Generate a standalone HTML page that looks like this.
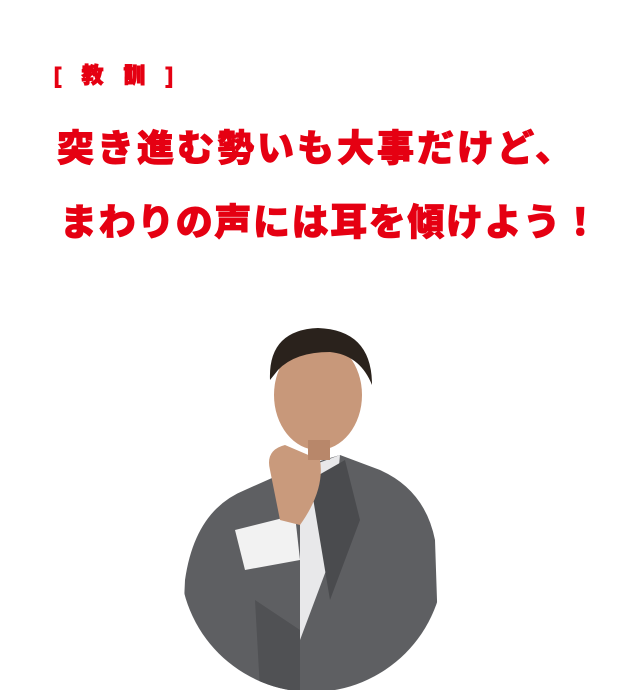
<!DOCTYPE html>
<html><head><meta charset="utf-8"><style>
html,body{margin:0;padding:0;background:#fff;width:635px;height:690px;overflow:hidden;position:relative}
.t{position:absolute;font-family:"Liberation Sans","Noto Sans CJK JP",sans-serif;font-weight:900;color:#e50012;white-space:nowrap;-webkit-text-stroke:0.9px #e50012}
</style></head><body>
<div class="t" style="left:54px;top:58px;font-size:22px;letter-spacing:7px">[ 教 訓 ]</div>
<div class="t" style="left:57px;top:118px;font-size:37px;letter-spacing:3px">突き進む勢いも大事だけど、</div>
<div class="t" style="left:60px;top:192px;font-size:37px;letter-spacing:1.6px">まわりの声には耳を傾けよう！</div>
<svg style="position:absolute;left:0;top:0" width="635" height="690">
<defs><clipPath id="c"><circle cx="312" cy="560" r="132"/></clipPath></defs>
<g clip-path="url(#c)">
<path d="M180 690 L185 580 Q195 510 245 490 L290 470 L340 455 L380 470 Q425 490 435 540 L440 690 Z" fill="#5e5f62"/>
<path d="M300 470 L340 455 L330 560 L300 640 Z" fill="#e8e8ea"/>
<path d="M310 480 L345 460 L360 520 L330 600 Z" fill="#4a4b4e"/>
<path d="M235 530 L295 515 L300 560 L245 570 Z" fill="#f2f2f2"/>
<path d="M270 470 Q265 450 285 445 L320 460 Q325 490 300 525 L280 520 Z" fill="#c99a7c"/>
<path d="M255 600 L300 630 L300 690 L260 690 Z" fill="#505154"/>
</g>
<ellipse cx="318" cy="395" rx="44" ry="55" fill="#c8987a"/>
<path d="M270 380 Q268 330 318 328 Q372 330 372 385 Q360 355 330 352 Q295 352 278 370 Z" fill="#2a221c"/>
<rect x="308" y="440" width="22" height="20" fill="#b8876a"/>
</svg>
</body></html>
